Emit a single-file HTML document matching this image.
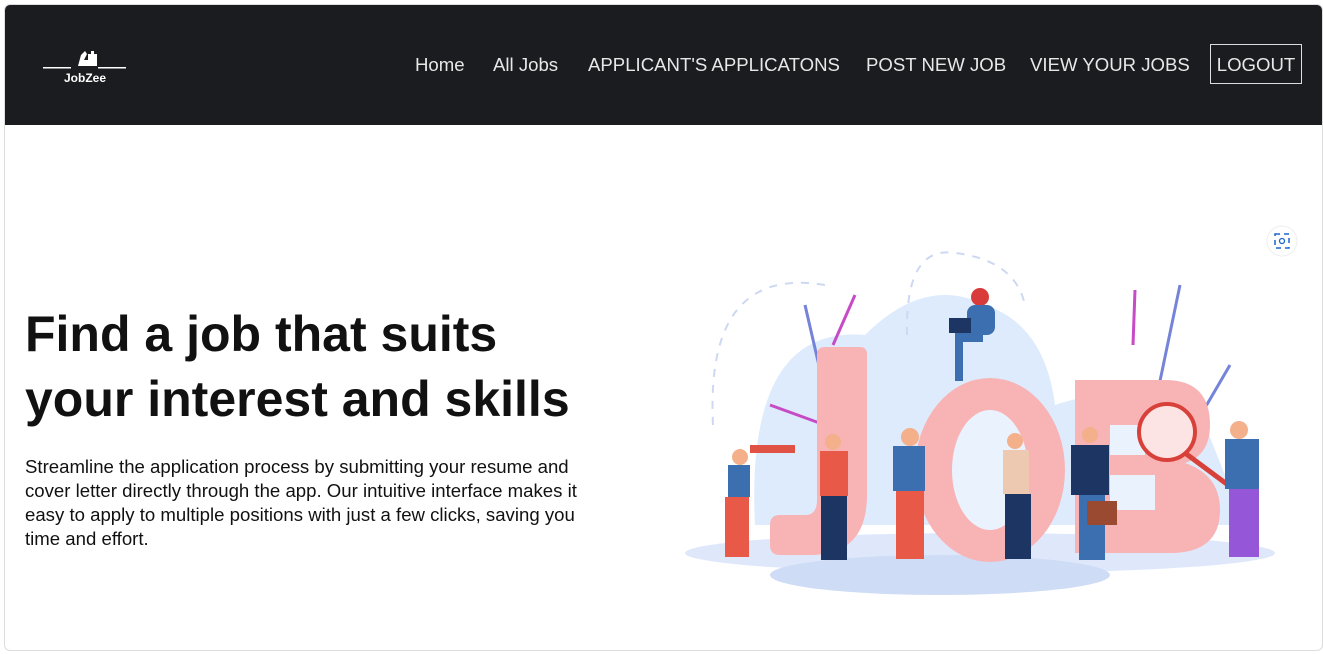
<!DOCTYPE html>
<html><head><meta charset="utf-8"><style>
html,body{margin:0;padding:0;background:#fff;width:1323px;height:654px;overflow:hidden;font-family:"Liberation Sans",Roboto,sans-serif}
.card{position:absolute;left:4px;top:4px;width:1317px;height:645px;border:1px solid #ddd;border-radius:6px;overflow:hidden;background:#fff}
.hdr{position:absolute;left:0;top:0;width:100%;height:120px;background:#1b1c20}
.nav{position:absolute;top:49px;font-size:18.6px;color:#e8e8e8;white-space:nowrap}
.lo{position:absolute;left:1205px;top:39px;width:92px;height:40px;border:1px solid #ddd;box-sizing:border-box;color:#e8e8e8;font-size:18.6px;text-align:center;line-height:39px}
h1{position:absolute;left:20px;top:297px;margin:0;font-size:50px;line-height:65px;font-weight:bold;color:#111}
p{position:absolute;left:20px;top:450px;margin:0;width:590px;font-size:18.6px;line-height:24px;color:#111}
</style></head><body>
<div class="card">
<div class="hdr">
 <svg style="position:absolute;left:36px;top:40px" width="90" height="42" viewBox="0 0 90 42">
  <rect x="2" y="22" width="28" height="1.5" fill="#fff"/><rect x="57" y="22" width="28" height="1.5" fill="#fff"/>
  <path d="M37 21 L40 10 L44 6 L46 9 L43 15 L47 15 L47 9 L50 9 L50 6 L53 6 L53 9 L56 9 L56 21 Z" fill="#fff"/>
  <text x="44" y="37" fill="#fff" font-size="12" font-weight="bold" text-anchor="middle" font-family="Liberation Sans">JobZee</text>
 </svg>
 <span class="nav" style="left:410px">Home</span>
 <span class="nav" style="left:488px">All Jobs</span>
 <span class="nav" style="left:583px">APPLICANT'S APPLICATONS</span>
 <span class="nav" style="left:861px">POST NEW JOB</span>
 <span class="nav" style="left:1025px">VIEW YOUR JOBS</span>
 <div class="lo">LOGOUT</div>
</div>
<h1>Find a job that suits<br>your interest and skills</h1>
<p>Streamline the application process by submitting your resume and cover letter directly through the app. Our intuitive interface makes it easy to apply to multiple positions with just a few clicks, saving you time and effort.</p>
<svg style="position:absolute;left:0;top:0" width="1317" height="645">
 <circle cx="1277" cy="236" r="15" fill="#fff" stroke="#eee"/>
 <rect x="1270" y="229" width="14" height="14" fill="none" stroke="#1a66d2" stroke-width="1.5" stroke-dasharray="5 4"/><circle cx="1277" cy="236" r="2.5" fill="none" stroke="#1a66d2" stroke-width="1.3"/>
 <ellipse cx="975" cy="548" rx="295" ry="20" fill="#dfe8fb"/>
 <ellipse cx="935" cy="570" rx="170" ry="20" fill="#cfdcf6"/>
 <path d="M750 520 Q740 320 860 330 Q920 270 980 300 Q1040 320 1050 400 Q1140 370 1200 420 L1240 520 Z" fill="#deebfc"/>
 <path d="M708 420 Q700 260 820 280" fill="none" stroke="#cdd8f2" stroke-width="2" stroke-dasharray="8 8"/>
 <path d="M902 330 Q900 240 950 248 Q1010 255 1020 300" fill="none" stroke="#cdd8f2" stroke-width="2" stroke-dasharray="8 8"/>
 <g stroke="#7583d9" stroke-width="3" fill="none"><path d="M800 300 L830 430"/><path d="M1175 280 L1150 400"/><path d="M1225 360 L1190 420"/></g>
 <g stroke="#c74bc6" stroke-width="3" fill="none"><path d="M850 290 L828 340"/><path d="M1130 285 L1128 340"/><path d="M765 400 L820 420"/></g>
 <path d="M812 350 Q812 342 820 342 L855 342 Q862 342 862 350 L862 490 Q862 550 805 550 L775 550 Q765 550 765 540 L765 520 Q765 510 775 510 L800 510 Q812 510 812 495 Z" fill="#f8b3b5"/>
 <ellipse cx="985" cy="465" rx="75" ry="92" fill="#f8b3b5"/><ellipse cx="985" cy="465" rx="38" ry="60" fill="#eaf2fe"/>
 <path d="M1070 375 L1160 375 Q1205 375 1205 420 Q1205 450 1180 458 Q1215 470 1215 505 Q1215 548 1165 548 L1070 548 Z" fill="#f8b3b5"/>
 <rect x="1105" y="420" width="35" height="30" fill="#eaf2fe"/><rect x="1105" y="470" width="45" height="35" fill="#eaf2fe"/>
 <circle cx="1162" cy="427" r="28" fill="#fde4e4" stroke="#d8413a" stroke-width="4"/><path d="M1180 448 L1250 500" stroke="#d8413a" stroke-width="5"/>
 <g><circle cx="975" cy="292" r="9" fill="#d93b3b"/><rect x="962" y="300" width="28" height="30" rx="8" fill="#3c6fb0"/><rect x="950" y="325" width="28" height="12" fill="#3c6fb0"/><rect x="950" y="330" width="8" height="46" fill="#3c6fb0"/><rect x="944" y="313" width="22" height="15" fill="#1d3563"/></g>
 <g><circle cx="735" cy="452" r="8" fill="#f3b08b"/><rect x="723" y="460" width="22" height="32" fill="#3c6fb0"/><rect x="720" y="492" width="24" height="60" fill="#e85a47"/><rect x="745" y="440" width="45" height="8" fill="#e05244"/></g>
 <g><circle cx="828" cy="437" r="8" fill="#f3b08b"/><rect x="815" y="446" width="28" height="45" fill="#e85a47"/><rect x="816" y="491" width="26" height="64" fill="#1d3563"/></g>
 <g><circle cx="905" cy="432" r="9" fill="#f3b08b"/><rect x="888" y="441" width="32" height="45" fill="#3c6fb0"/><rect x="891" y="486" width="28" height="68" fill="#e85a47"/></g>
 <g><circle cx="1010" cy="436" r="8" fill="#f3b08b"/><rect x="998" y="445" width="26" height="44" fill="#ecc9b0"/><rect x="1000" y="489" width="26" height="65" fill="#1d3563"/></g>
 <g><circle cx="1085" cy="430" r="8" fill="#f3b08b"/><rect x="1066" y="440" width="38" height="50" fill="#1d3563"/><rect x="1074" y="490" width="26" height="65" fill="#3c6fb0"/><rect x="1082" y="496" width="30" height="24" fill="#9b4a32"/></g>
 <g><circle cx="1234" cy="425" r="9" fill="#f3b08b"/><rect x="1220" y="434" width="34" height="50" fill="#3c6fb0"/><rect x="1224" y="484" width="30" height="68" fill="#9656d8"/></g>
</svg>
</div>
</body></html>
